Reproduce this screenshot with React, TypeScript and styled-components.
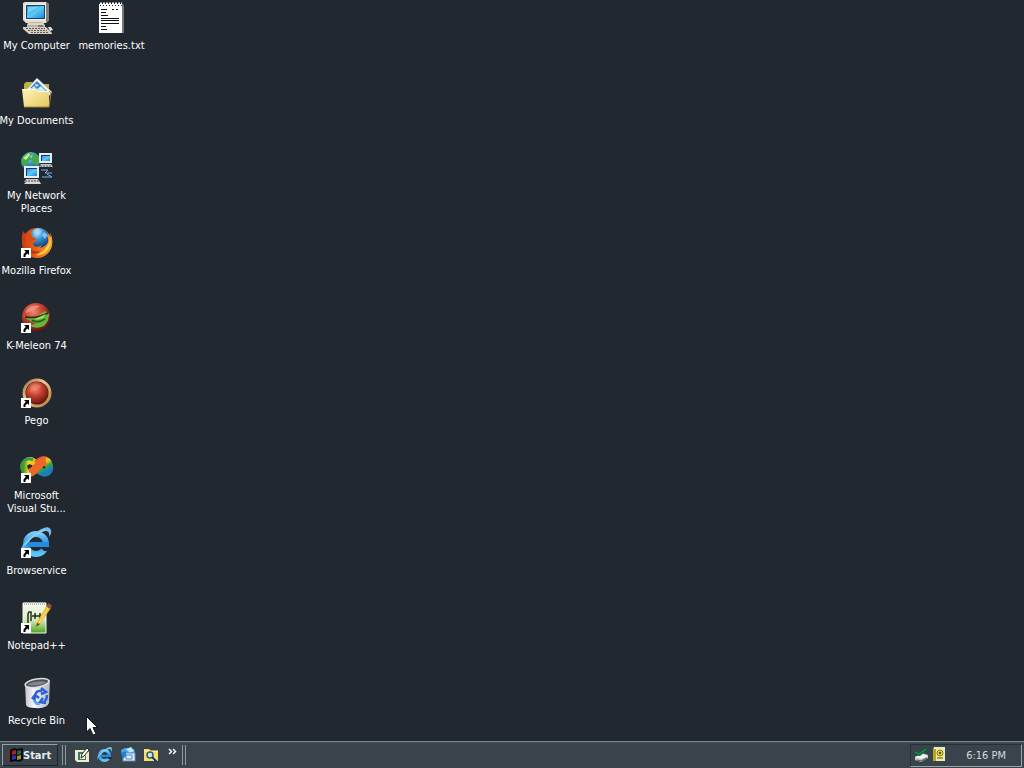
import React from "react";
import styled, { createGlobalStyle } from "styled-components";

const Global = createGlobalStyle`
  * { box-sizing: border-box; }
  html, body { margin: 0; background: #222830; }
  button { font: inherit; color: inherit; padding: 0; border: 0; background: none; cursor: default; }
  svg { display: block; flex: none; }
`;

const Screen = styled.div`
  display: flex;
  flex-direction: column;
  min-height: 100vh;
  overflow: hidden;
  background: #222830;
  color: #fff;
  font-family: "DejaVu Sans Condensed", Tahoma, "Noto Sans", sans-serif;
  font-size: 11px;
  line-height: 13px;
`;

const Desktop = styled.main`
  flex: 1;
  display: grid;
  grid-auto-flow: column;
  grid-template-rows: repeat(10, 64px);
  grid-auto-columns: 73px;
  align-content: start;
  justify-content: start;
  gap: 11px 2px;
  padding-top: 2px;
`;

const Shortcut = styled.button`
  display: flex;
  flex-direction: column;
  align-items: center;
  justify-content: flex-start;
  gap: 5px;
`;

const Label = styled.span`
  text-align: center;
  white-space: pre;
`;

const Taskbar = styled.footer`
  display: flex;
  align-items: center;
  height: 27px;
  padding: 0 2px;
  background: #38434b;
  border-top: 1px solid #73858b;
  box-shadow: inset 0 1px #465158;
`;

const StartButton = styled.button`
  display: flex;
  align-items: center;
  width: 56px;
  height: 22px;
  padding-left: 4px;
  border: 1px solid;
  border-color: #94a2a6 #1c2429 #1c2429 #94a2a6;
  font-weight: bold;
  color: #e6ecee;
`;

const Grip = styled.span`
  width: 4px;
  height: 20px;
  margin-left: 4px;
  border: solid #8c999e;
  border-width: 0 1px;
`;

const QuickLaunch = styled.nav`
  display: flex;
  align-items: center;
  gap: 7px;
  margin-left: 8px;
`;

const More = styled.button`
  width: 12px;
  height: 20px;
`;

const Tray = styled.section`
  display: flex;
  align-items: center;
  gap: 2px;
  width: 112px;
  height: 23px;
  margin-left: auto;
  padding: 0 15px 0 2px;
  border: 1px solid;
  border-color: #263037 #97a5a9 #97a5a9 #263037;
  color: #d3dadc;
`;

const Clock = styled.time`
  margin-left: auto;
  white-space: nowrap;
`;

const Pointer = styled.svg`
  position: fixed;
  left: 86px;
  top: 716px;
  pointer-events: none;
`;

const Art = ({ children, size = 32 }: { children: React.ReactNode; size?: number }) => (
  <svg width={size} height={size} viewBox={`0 0 ${size} ${size}`} overflow="visible" aria-hidden="true">
    {children}
  </svg>
);

const Arrow = () => (
  <g>
    <rect x="0" y="21" width="10" height="10" fill="#fff" />
    <path d="M3 23H8V28L6.400 26.400L4.500 28.300V30H2.500V27.500L4.800 24.800Z" fill="#000" />
  </g>
);

const Gradients = () => (
  <svg width="0" height="0" aria-hidden="true">
    <defs>
      <linearGradient id="screen" x1="0" y1="0" x2="1" y2="1">
        <stop offset="0" stopColor="#2a9bdc" />
        <stop offset=".5" stopColor="#5cc8f4" />
        <stop offset="1" stopColor="#1b8ad4" />
      </linearGradient>
      <linearGradient id="folder" x1="0" y1="0" x2="1" y2="1">
        <stop offset="0" stopColor="#fff4b4" />
        <stop offset="1" stopColor="#e6c766" />
      </linearGradient>
      <radialGradient id="globe" cx=".4" cy=".25" r=".8">
        <stop offset="0" stopColor="#b4ecff" />
        <stop offset=".4" stopColor="#3a94d8" />
        <stop offset="1" stopColor="#0c3476" />
      </radialGradient>
      <linearGradient id="fox" x1="0" y1="0" x2="1" y2="0">
        <stop offset="0" stopColor="#c9380f" />
        <stop offset=".5" stopColor="#e8661a" />
        <stop offset="1" stopColor="#f9a52a" />
      </linearGradient>
      <radialGradient id="red" cx=".4" cy=".3" r=".75">
        <stop offset="0" stopColor="#ee8a74" />
        <stop offset=".45" stopColor="#c5402e" />
        <stop offset="1" stopColor="#5c120c" />
      </radialGradient>
      <linearGradient id="ring" x1="0" y1="0" x2="1" y2="1">
        <stop offset="0" stopColor="#9a6a3c" />
        <stop offset=".4" stopColor="#ecca94" />
        <stop offset="1" stopColor="#b4783a" />
      </linearGradient>
      <linearGradient id="ie" x1="0" y1="0" x2="0" y2="1">
        <stop offset="0" stopColor="#73cdfa" />
        <stop offset=".5" stopColor="#248be0" />
        <stop offset="1" stopColor="#62c6fa" />
      </linearGradient>
      <linearGradient id="paper" x1="0" y1="0" x2="0" y2="1">
        <stop offset="0" stopColor="#f7faf0" />
        <stop offset=".55" stopColor="#dcecc4" />
        <stop offset="1" stopColor="#4ca51c" />
      </linearGradient>
      <linearGradient id="bin" x1="0" y1="0" x2="1" y2="0">
        <stop offset="0" stopColor="#c3c3cc" />
        <stop offset=".35" stopColor="#f5f5fa" />
        <stop offset="1" stopColor="#b4b4c0" />
      </linearGradient>
      <linearGradient id="loopLeft" x1="0" y1="0" x2="1" y2="0">
        <stop offset="0" stopColor="#3f9a34" />
        <stop offset=".35" stopColor="#f0d81c" />
        <stop offset="1" stopColor="#f7b51a" />
      </linearGradient>
      <linearGradient id="loopRight" x1="0" y1="0" x2=".6" y2="1">
        <stop offset="0" stopColor="#ea5c22" />
        <stop offset=".4" stopColor="#f4cf1c" />
        <stop offset=".7" stopColor="#35a545" />
        <stop offset="1" stopColor="#1d7fb8" />
      </linearGradient>
    </defs>
  </svg>
);

const Computer = () => (
  <Art>
    <path d="M2 1L4 0H25L28 2V18L25 21H5L2 18Z" fill="#e4e0d6" />
    <path d="M25 0L28 2V18L25 21Z" fill="#827e78" />
    <rect x="4" y="2" width="21" height="16" fill="#f4f1e9" />
    <rect x="5" y="3" width="19" height="14" fill="#163e70" />
    <rect x="6" y="4" width="17" height="12" fill="url(#screen)" />
    <path d="M7 5H17L7 11Z" fill="#a4e4ff" opacity=".6" />
    <path d="M9 20H21L24 23V26H6V22Z" fill="#bab4a8" />
    <path d="M7 22H23" stroke="#fff8e6" />
    <path d="M17 24H22" stroke="#484640" />
    <path d="M2 25H25L31 31V32H8L2 27Z" fill="#d4cec2" />
    <path d="M5 26.500H24M7 28.500H26M10 30.500H28" stroke="#625d58" strokeDasharray="2 1" />
    <path d="M27 25H30L32 28L29 29Z" fill="#e8e3da" />
  </Art>
);

const Documents = () => (
  <Art>
    <path d="M3 7L5 5H11L13 7H28V14H3Z" fill="#b7b638" />
    <path d="M16 1L31 15L24 24L6 12Z" fill="#f2f7fb" stroke="#8a9aa8" strokeWidth=".5" />
    <path d="M16 4L26 14L20 19L9 11Z" fill="#3a82c8" />
    <path d="M9 12L13 9L16 12L20 9L25 14L21 18Z" fill="#c2e4f6" />
    <path d="M14 7L18 8L15 10ZM19 10L22 12L18 13Z" fill="#dff3ff" />
    <path d="M1 12H15L17 14H28V30H3Z" fill="url(#folder)" />
    <path d="M1.500 12.500H15L17 14.500H28" fill="none" stroke="#fff9cc" />
    <path d="M28 14L30 16L28 30H3" fill="none" stroke="#a58730" />
  </Art>
);

const Monitor = ({ x, y, w, h }: { x: number; y: number; w: number; h: number }) => (
  <g>
    <rect x={x} y={y} width={w} height={h} fill="#e8ecf0" />
    <rect x={x + 2} y={y + 2} width={w - 4} height={h - 4} fill="#123a76" />
    <rect x={x + 3} y={y + 3} width={w - 5} height={h - 5} fill="url(#screen)" />
    <path d={`M${x + 2} ${y + h + 1}H${x + w - 1}L${x + w + 1} ${y + h + 4}H${x}Z`} fill="#c6c6c2" />
    <path d={`M${x + 1} ${y + h + 3}H${x + w}`} stroke="#54565a" strokeDasharray="2 1" />
  </g>
);

const Network = () => (
  <Art>
    <circle cx="10" cy="10" r="10" fill="url(#globe)" />
    <path d="M2 4L7 1L12 1L9 5L11 7L7 10L5 15L1 13L0 8ZM12 2L17 3L19 8L17 14L12 12L10 8Z" fill="#45a84c" />
    <path d="M2 6L8 1L9 3L5 8Z" fill="#c0f09a" />
    <Monitor x={18} y={1} w={13} h={10} />
    <Monitor x={3} y={14} w={15} h={12} />
    <path d="M20 18H27L24 21H31M21 25H31L26 22" fill="none" stroke="#74b4ec" />
    <path d="M5 30H19L20 32H3Z" fill="#d8d8d4" />
  </Art>
);

const Firefox = () => (
  <Art>
    <circle cx="16" cy="16" r="15" fill="url(#fox)" />
    <circle cx="18" cy="11" r="10" fill="url(#globe)" />
    <path d="M13 3L17 1L21 4L18 7L14 7ZM23 5L27 8L24 12L21 8Z" fill="#a8daf2" opacity=".7" />
    <path d="M2 4L5 8Q9 5 12 7L10 10L15 12L16 14L12 16L13 19Q17 21 21 18Q19 23 13 23Q20 28 25 20Q29 15 26 8L30 11L29 5Q35 18 26 27Q17 34 7 27Q-2 18 2 4Z" fill="url(#fox)" />
    <path d="M29 9Q32 18 25 25Q20 29 15 28Q29 22 29 9Z" fill="#ffd04a" />
    <path d="M5 8L10 9L15 12L11 14L5 18Z" fill="#dc4b16" />
    <path d="M7 20Q12 26 20 24Q14 29 7 25Z" fill="#b83512" />
    <Arrow />
  </Art>
);

const Meleon = () => (
  <Art>
    <circle cx="15" cy="15" r="14" fill="url(#red)" />
    <path d="M1 14Q8 16 14 15L24 9L28 12Q28 19 23 24Q14 28 8 23L15 22L6 17Z" fill="#65b63a" />
    <path d="M4 15Q16 17 27 11" fill="none" stroke="#3a2013" strokeWidth="1.500" />
    <path d="M11 18Q16 22 24 17" fill="none" stroke="#205f1c" strokeWidth="2" />
    <path d="M16 16L25 12L22 16L14 18Z" fill="#a8dc64" />
    <path d="M5 9Q10 2 19 4L13 8L5 11Z" fill="#f5a698" opacity=".6" />
    <Arrow />
  </Art>
);

const Pego = () => (
  <Art>
    <circle cx="16" cy="16" r="13" fill="#52180e" stroke="url(#ring)" strokeWidth="3" />
    <circle cx="16" cy="16" r="11" fill="url(#red)" />
    <path d="M10 10Q15 5 20 9L16 13L9 15Z" fill="#ef886c" opacity=".5" />
    <Arrow />
  </Art>
);

const VisualStudio = () => (
  <Art>
    <path d="M14 18Q7 24 4 19Q1 13 5 10Q10 6 16 13" fill="none" stroke="url(#loopLeft)" strokeWidth="7" />
    <path d="M16 12Q23 5 27 11Q30 17 26 20Q22 22 17 17" fill="none" stroke="url(#loopRight)" strokeWidth="8" />
    <path d="M9 21Q14 18 17 14Q20 10 25 9" fill="none" stroke="#ed672b" strokeWidth="8" />
    <path d="M3 9Q7 5 12 8" fill="none" stroke="#2b9c54" strokeWidth="3" />
    <Arrow />
  </Art>
);

const ExplorerMark = () => (
  <>
    <circle cx="15" cy="17" r="10" fill="none" stroke="url(#ie)" strokeWidth="6" />
    <path d="M7 15H28V20H7Z" fill="#258be0" />
    <path d="M19 20H29V24H23Z" fill="#222830" />
    <path d="M11 15Q15 9 20 15Z" fill="#18304b" />
    <path d="M0 26Q-1 15 17 4Q28 -3 30 3Q31 6 28 10Q29 4 25 4Q13 5 2 22Z" fill="#73bee8" />
    <path d="M4 18Q13 6 24 3" fill="none" stroke="#b4def4" />
  </>
);

const Browservice = () => (
  <Art><ExplorerMark /><Arrow /></Art>
);

const Notepad = () => (
  <Art>
    <path d="M2 1H25V31H2Z" fill="url(#paper)" stroke="#f5f6f0" />
    <path d="M3 1.500H24" stroke="#bababa" strokeWidth="3" strokeDasharray="1 1" />
    <path d="M7 21V12L8 10H10V19M11 14H17M14 11V17M17 14H22M19 11V17" fill="none" stroke="#252f19" strokeWidth="1.500" />
    <path d="M26 3L30 6L19 22L15 25L16 20Z" fill="#edbc31" />
    <path d="M25 4L28 1L31 4L29 7Z" fill="#8c563d" />
    <path d="M27 6L18 21" stroke="#fff08a" />
    <path d="M15 25L16 21L19 22Z" fill="#604821" />
    <Arrow />
  </Art>
);

const Recycle = () => (
  <Art>
    <path d="M4 6L29 3L28 26Q26 32 14 31Q6 31 5 28Z" fill="url(#bin)" />
    <ellipse cx="16" cy="6" rx="12" ry="4" transform="rotate(-10 16 6)" fill="#4d4d54" stroke="#dedee5" strokeWidth="1.500" />
    <path d="M7 7Q15 3 26 5Q18 10 7 8Z" fill="#85858e" />
    <path d="M14 20Q14 13 21 14M20 11L25 15L20 17M26 18Q26 23 22 26M25 26L19 25L22 21M17 27Q12 25 14 20M11 22L14 18L18 21" fill="none" stroke="#2860d8" strokeWidth="2.500" />
    <path d="M13 23Q14 27 19 27" fill="none" stroke="#5cb4ef" strokeWidth="2" />
  </Art>
);

const TextFile = () => (
  <Art>
    <path d="M4 2H27L28 4V31H4Z" fill="#77777b" />
    <path d="M3 2H26V31H3Z" fill="#fff" />
    <path d="M4 2H26" stroke="#fff" strokeWidth="3" strokeDasharray="2 1" />
    <path d="M4 3.500H26" stroke="#222" strokeDasharray="1 2" />
    <path d="M5 7.500H11M16 7.500H18M20 7.500H22M5 10.500H10M5 13.500H12M5 16.500H23M5 18.500H23M5 21.500H23M5 24.500H10M5 27.500H11" stroke="#111" />
  </Art>
);

const WindowsFlag = () => (
  <Art size={16}>
    <path d="M1 4H3M0 7H3M1 10H3M0 13H3" stroke="#8d2530" strokeWidth="1.500" />
    <path d="M3 3Q7 0 10 2L16 1V13Q12 16 9 14L3 15Z" fill="#06090c" />
    <path d="M5 4L9 3V7L5 8Z" fill="#a8242c" />
    <path d="M10 4L14 3V7L10 8Z" fill="#1f6a38" />
    <path d="M5 9L9 8V12L5 13Z" fill="#2834ad" />
    <path d="M10 9L14 8V12L10 13Z" fill="#a78d26" />
  </Art>
);

const ShowDesktop = () => (
  <Art size={16}>
    <path d="M1 3H13L15 5V15H3L1 13Z" fill="#eeeccb" />
    <path d="M4 5H10L8 7H6V12H11V9L12 8V13H4Z" fill="#3f7769" />
    <path d="M7 11L8 7L13 1L15 3L10 9Z" fill="#fffce3" stroke="#262b29" />
  </Art>
);

const Explorer = () => (
  <Art size={16}><g transform="scale(.5)"><ExplorerMark /></g></Art>
);

const Mail = () => (
  <Art size={16}>
    <path d="M1 3L5 1L14 2L15 6L12 8H2Z" fill="#4ea9e4" />
    <path d="M6 2L11 0L14 4L10 6Z" fill="#b8eaff" />
    <rect x="3" y="6" width="12" height="8" fill="#e0efff" stroke="#588dc4" />
    <path d="M6 8H12V12H6Z" fill="none" stroke="#4a7fb8" />
    <path d="M1 6L6 4V9L3 12Z" fill="#257ecc" />
  </Art>
);

const FolderSearch = () => (
  <Art size={16}>
    <path d="M1 2H6L8 4H15V14H1Z" fill="#f8df68" />
    <path d="M1 4H15" stroke="#fff5a8" />
    <circle cx="7" cy="8" r="3" fill="#bceaf0" stroke="#365e6d" strokeWidth="1.500" />
    <path d="M9 10L14 15" stroke="#183484" strokeWidth="2" />
  </Art>
);

const Eject = () => (
  <Art size={16}>
    <path d="M2 10L9 6L15 8V11L8 15L2 13Z" fill="#bec8c5" />
    <path d="M2 10L9 7L15 9L8 12Z" fill="#f2f4f2" />
    <path d="M4 13L8 14L14 11" fill="none" stroke="#555" />
    <path d="M0 4L5 5L13 0L15 2L7 9L1 8Z" fill="#0d5c34" />
    <path d="M2 5L6 7L13 2" fill="none" stroke="#2e9c5c" />
  </Art>
);

const TrayBadge = () => (
  <Art size={16}>
    <path d="M3 0H14V14H2V3Z" fill="#e9e9c6" />
    <path d="M2 2H5V14H2Z" fill="#b7a61e" />
    <circle cx="9" cy="6" r="3" fill="#e0d52b" stroke="#857b10" />
    <path d="M8 5H10V7H8Z" fill="#4f4c15" />
    <path d="M6 10H12V12H6Z" fill="#b5a418" />
  </Art>
);

const shortcuts = [
  { name: "My Computer", icon: <Computer /> },
  { name: "My Documents", icon: <Documents /> },
  { name: "My Network\nPlaces", icon: <Network /> },
  { name: "Mozilla Firefox", icon: <Firefox /> },
  { name: "K-Meleon 74", icon: <Meleon /> },
  { name: "Pego", icon: <Pego /> },
  { name: "Microsoft\nVisual Stu...", icon: <VisualStudio /> },
  { name: "Browservice", icon: <Browservice /> },
  { name: "Notepad++", icon: <Notepad /> },
  { name: "Recycle Bin", icon: <Recycle /> },
  { name: "memories.txt", icon: <TextFile /> },
];

const launchers = [
  { name: "Show Desktop", icon: <ShowDesktop /> },
  { name: "Internet Explorer", icon: <Explorer /> },
  { name: "Outlook Express", icon: <Mail /> },
  { name: "Search Files", icon: <FolderSearch /> },
];

export default function App() {
  return (
    <Screen>
      <Global />
      <Desktop>
        {shortcuts.map(({ name, icon }) => (
          <Shortcut key={name} type="button">
            {icon}
            <Label>{name}</Label>
          </Shortcut>
        ))}
      </Desktop>
      <Taskbar>
        <StartButton type="button"><WindowsFlag />Start</StartButton>
        <Grip />
        <QuickLaunch aria-label="Quick Launch">
          {launchers.map(({ name, icon }) => (
            <button key={name} type="button" aria-label={name}>{icon}</button>
          ))}
          <More type="button" aria-label="More quick launch items">
            <svg width="12" height="14" viewBox="0 0 12 14" aria-hidden="true">
              <path d="M3 1L5.500 3.500L3 6M7 1L9.500 3.500L7 6" fill="none" stroke="#f0f4f5" strokeWidth="1.500" />
            </svg>
          </More>
        </QuickLaunch>
        <Grip />
        <Tray aria-label="Notification area">
          <Eject />
          <TrayBadge />
          <Clock>6:16 PM</Clock>
        </Tray>
      </Taskbar>
      <Pointer width="12" height="20" viewBox="0 0 12 20" aria-hidden="true">
        <path d="M.5 .5V16L4 12.500L7 19L10 18L7 11.500H11.500Z" fill="#fff" stroke="#111820" />
      </Pointer>
      <Gradients />
    </Screen>
  );
}
